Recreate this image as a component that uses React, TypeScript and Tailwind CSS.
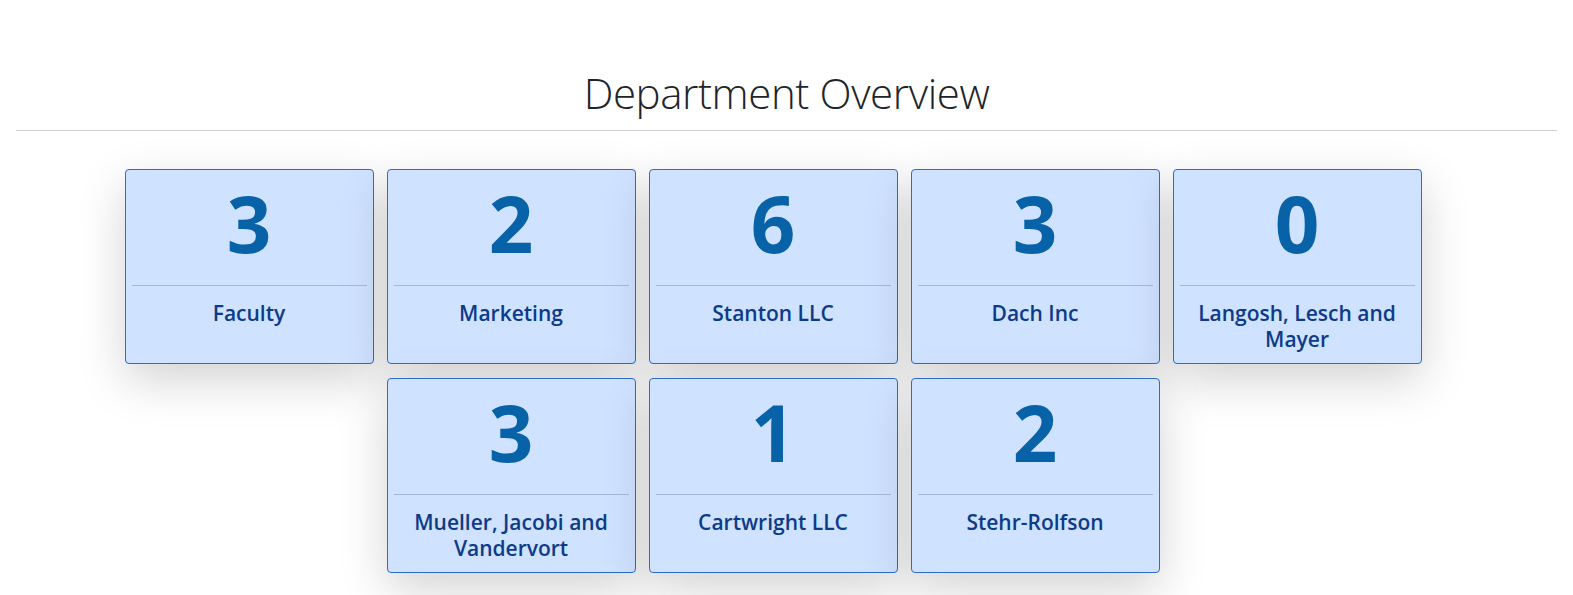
const departments = [
  { name: "Faculty", count: 3 },
  { name: "Marketing", count: 2 },
  { name: "Stanton LLC", count: 6 },
  { name: "Dach Inc", count: 3 },
  { name: "Langosh, Lesch and Mayer", count: 0 },
  { name: "Mueller, Jacobi and Vandervort", count: 3 },
  { name: "Cartwright LLC", count: 1 },
  { name: "Stehr-Rolfson", count: 2 },
];

function DepartmentCard({ name, count }: { name: string; count: number }) {
  return (
    <div className="flex h-[195px] w-[249px] flex-col rounded border border-[#2f6bc8] bg-[#cfe2ff] p-[6px] shadow-[0_1rem_3rem_rgba(0,0,0,0.175)]">
      <div className="h-[109px] pt-[8px] text-center text-[78px] font-bold leading-none text-[#0862a8]">
        {count}
      </div>
      <div className="border-t border-[#a6bad8]" />
      <div className="px-2 pt-[14px] text-center text-[21px] font-semibold leading-[26px] text-[#0d3b88]">
        {name}
      </div>
    </div>
  );
}

export default function App() {
  return (
    <div className="min-h-screen bg-white px-[16px] font-['Open_Sans','Noto_Sans',sans-serif] text-[#212529]">
      <h1 className="pt-[68px] text-center text-[42px] font-light leading-[1.2] tracking-[-0.4px]">
        Department Overview
      </h1>
      <div className="mt-[12px] border-t border-[#cfcfcf]" />
      <div className="mt-[38px] flex flex-wrap justify-center gap-x-[13px] gap-y-[14px] pr-[27px]">
        {departments.map((d) => (
          <DepartmentCard key={d.name} name={d.name} count={d.count} />
        ))}
      </div>
    </div>
  );
}
